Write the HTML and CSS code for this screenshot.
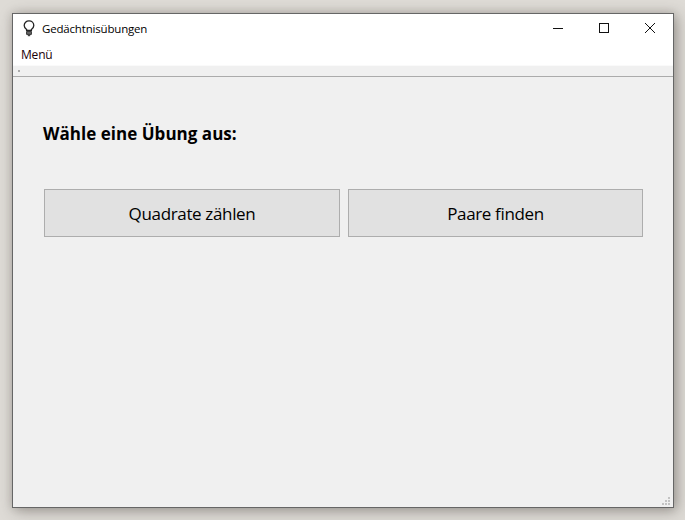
FILE: index.html
```html
<!DOCTYPE html>
<html lang="de">
<head>
<meta charset="utf-8">
<title>Gedächtnisübungen</title>
<link rel="stylesheet" href="styles.css">
</head>
<body>
<div class="window">
  <header class="titlebar">
    <svg class="app-icon" width="14" height="17" viewBox="0 0 14 17" fill="none" stroke="#222" stroke-width="1.3">
      <path d="M4.6 10.4V9.4C3.4 8.5 2.2 7.4 2.2 5.4C2.2 2.8 4.2 .9 7 .9S11.8 2.8 11.8 5.4C11.8 7.4 10.6 8.5 9.4 9.4V10.4Z"/>
      <path d="M4.6 11.4H9.4V14.4H4.6Z" fill="#666" stroke="#333" stroke-width="1"/>
      <path d="M5.8 15.6H8.2" stroke-width="1.2" stroke="#444"/>
    </svg>
    <span class="title">Gedächtnisübungen</span>
    <div class="controls">
      <svg class="ctl" width="12" height="12" viewBox="0 0 12 12"><path d="M1 6.5H11" stroke="#111" stroke-width="1"/></svg>
      <svg class="ctl" width="12" height="12" viewBox="0 0 12 12"><rect x="1.5" y="1.5" width="9" height="9" fill="none" stroke="#111" stroke-width="1"/></svg>
      <svg class="ctl" width="12" height="12" viewBox="0 0 12 12"><path d="M1 1L11 11M11 1L1 11" stroke="#111" stroke-width="1"/></svg>
    </div>
  </header>
  <nav class="menubar"><span class="menu-item">Menü</span></nav>
  <div class="toolbar"><span class="grip"></span></div>
  <main class="content">
    <h1 class="heading">Wähle eine Übung aus:</h1>
    <div class="buttons">
      <button class="btn btn-first">Quadrate zählen</button>
      <button class="btn btn-second">Paare finden</button>
    </div>
    <div class="sizegrip">
      <i></i><i></i><i></i><i></i><i></i><i></i>
    </div>
  </main>
</div>
</body>
</html>
```
FILE: styles.css
```css
* { box-sizing: border-box; }
html, body { height: 100%; margin: 0; }
body {
  width: 685px;
  height: 520px;
  overflow: hidden;
  background: #dedbd6;
  padding: 13px 11px 12px 12px;
  font-family: "Open Sans", "Noto Sans", sans-serif;
  color: #000;
}
.window {
  width: 662px;
  height: 495px;
  border: 1px solid #666;
  background: #f0f0f0;
  display: flex;
  flex-direction: column;
  box-shadow: 3px 3px 14px rgba(60, 55, 50, 0.38), 0 0 8px rgba(60, 55, 50, 0.18);
}
.titlebar {
  height: 30px;
  background: #fff;
  display: flex;
  align-items: center;
  padding-left: 9px;
}
.app-icon { flex: none; margin-right: 6px; margin-top: -1px; }
.title {
  font-size: 11.5px;
  line-height: 16px;
  letter-spacing: -0.18px;
}
.controls {
  margin-left: auto;
  display: flex;
  align-items: center;
  gap: 34px;
  padding-right: 17px;
  margin-top: -2px;
}
.ctl { display: block; }
.menubar {
  height: 21px;
  background: #fff;
  padding-left: 8px;
  font-size: 12px;
  line-height: 22px;
  letter-spacing: -0.2px;
}
.menu-item { color: #1a0008; }
.toolbar {
  height: 12px;
  background: #f0f0f0;
  border-top: 1px solid #fafafa;
  border-bottom: 1px solid #ababab;
  padding: 4px 0 0 5px;
}
.grip { display: block; width: 2px; height: 2px; background: #aaa; }
.content {
  flex: 1;
  position: relative;
  padding: 45px 30px 0 30px;
  background: #f0f0f0;
}
.heading {
  margin: 0;
  font-size: 17px;
  line-height: 24px;
  font-weight: 700;
  letter-spacing: 0.03px;
}
.buttons {
  display: flex;
  gap: 8px;
  margin-top: 43px;
  margin-left: 1px;
}
.btn {
  height: 48px;
  border: 1px solid #adadad;
  background: #e1e1e1;
  font-family: inherit;
  font-size: 17px;
  letter-spacing: -0.35px;
  color: #000;
  padding: 0;
}
.btn-first { width: 296px; }
.btn-second { width: 295px; }
.sizegrip {
  position: absolute;
  right: 3px;
  bottom: 2px;
  width: 8px;
  height: 8px;
  display: grid;
  grid-template-columns: repeat(3, 2px);
  grid-template-rows: repeat(3, 2px);
  gap: 1px;
}
.sizegrip i { background: #c3c3c3; }
.sizegrip i:nth-child(1) { grid-area: 1 / 3; }
.sizegrip i:nth-child(2) { grid-area: 2 / 2; }
.sizegrip i:nth-child(3) { grid-area: 2 / 3; }
.sizegrip i:nth-child(4) { grid-area: 3 / 1; }
.sizegrip i:nth-child(5) { grid-area: 3 / 2; }
.sizegrip i:nth-child(6) { grid-area: 3 / 3; }
```
